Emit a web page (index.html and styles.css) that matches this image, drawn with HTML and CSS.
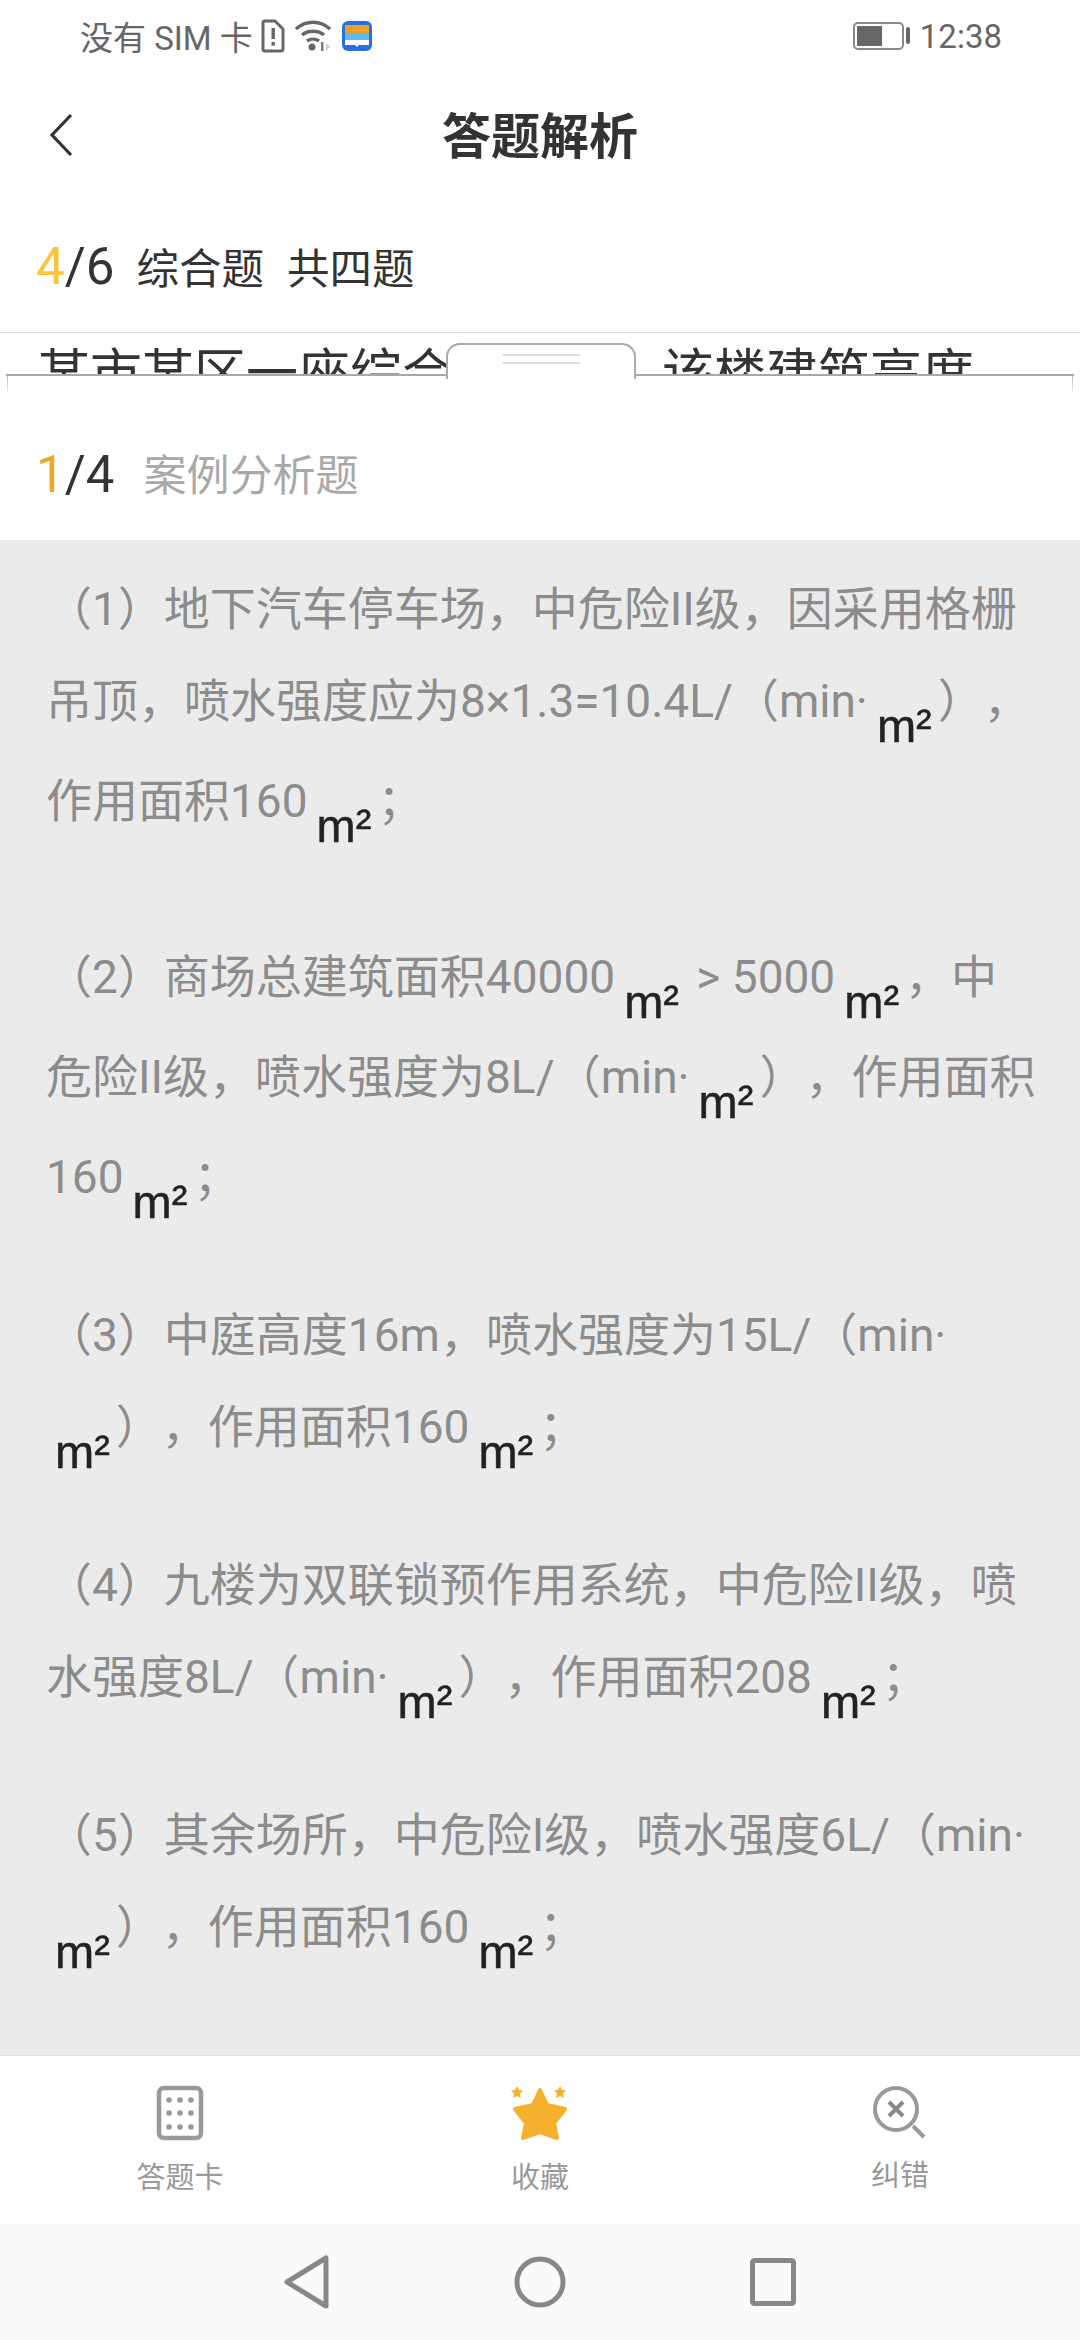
FILE: index.html
```html
<!DOCTYPE html>
<html lang="zh-CN">
<head>
<meta charset="UTF-8">
<meta name="viewport" content="width=device-width, initial-scale=1.0">
<title>答题解析</title>
<link rel="stylesheet" href="styles.css">
</head>
<body>
<div class="app">
  <div class="status-bar">
    <div class="status-left">
      <span>没有 SIM 卡</span>
      <svg class="ico-sim" width="24" height="34" viewBox="0 0 24 34"><path d="M4 2h10l8 8v20a2 2 0 0 1-2 2H4a2 2 0 0 1-2-2V4a2 2 0 0 1 2-2z" fill="none" stroke="#666" stroke-width="3"/><rect x="10.5" y="9" width="3.4" height="11" fill="#666"/><rect x="10.5" y="23" width="3.4" height="3.6" fill="#666"/></svg>
      <svg class="ico-wifi" width="36" height="32" viewBox="0 0 36 32"><path d="M1 9C11 0 25 0 35 9" fill="none" stroke="#666" stroke-width="3.4"/><path d="M7 15c6-5 16-5 22 0" fill="none" stroke="#666" stroke-width="3.4"/><path d="M12 21c3.500-2.500 8.500-2.500 12 0" fill="none" stroke="#666" stroke-width="3.4"/><circle cx="17" cy="27" r="3.500" fill="#666"/><rect x="26" y="22" width="2.500" height="9" fill="#777"/><path d="M31 23l4 4-4 4z" fill="#ccc"/></svg>
      <svg class="ico-app" width="30" height="30" viewBox="0 0 30 30"><rect width="30" height="30" rx="6" fill="#2a6fe0"/><rect x="3" y="4" width="24" height="8" fill="#ee9f2c"/><rect x="3" y="12" width="24" height="7" fill="#5cbcf5"/><path d="M3 19h24v5H17l-2 2-2-2H3z" fill="#fff"/></svg>
    </div>
    <div class="status-right">
      <svg class="ico-batt" width="58" height="28" viewBox="0 0 58 28"><rect x="1" y="1" width="49" height="26" rx="4" fill="none" stroke="#888" stroke-width="2"/><rect x="4" y="4" width="25" height="20" fill="#666"/><rect x="53" y="5" width="4" height="17" rx="2" fill="#666"/></svg>
      <span>12:38</span>
    </div>
  </div>

  <div class="nav-bar">
    <svg class="back" width="24" height="44" viewBox="0 0 24 44"><path d="M22 2L3 22l19 20" fill="none" stroke="#333" stroke-width="3.200"/></svg>
    <div class="nav-title">答题解析</div>
  </div>

  <div class="count-row main-count">
    <span class="count"><em class="gold">4</em>/6</span>
    <span class="type">综合题</span>
    <span class="type">共四题</span>
  </div>

  <div class="question-peek">某市某区一座综合商业楼，该楼建筑高度</div>

  <div class="sheet">
    <div class="handle"><i></i><i></i></div>
    <div class="count-row sub-count">
      <span class="count"><em class="amber">1</em>/4</span>
      <span class="sub-type">案例分析题</span>
    </div>
  </div>

  <div class="analysis">
    <p class="first">（1）地下汽车停车场，中危险II级，因采用格栅<br>吊顶，喷水强度应为8×1.3=10.4L/（min·<span class="unit">m²</span>），<br>作用面积160<span class="unit">m²</span>；</p>
    <p>（2）商场总建筑面积40000<span class="unit">m²</span> &gt; 5000<span class="unit">m²</span>，中<br>危险II级，喷水强度为8L/（min·<span class="unit">m²</span>），作用面积<br>160<span class="unit">m²</span>；</p>
    <p>（3）中庭高度16m，喷水强度为15L/（min·<br><span class="unit">m²</span>），作用面积160<span class="unit">m²</span>；</p>
    <p>（4）九楼为双联锁预作用系统，中危险II级，喷<br>水强度8L/（min·<span class="unit">m²</span>），作用面积208<span class="unit">m²</span>；</p>
    <p>（5）其余场所，中危险I级，喷水强度6L/（min·<br><span class="unit">m²</span>），作用面积160<span class="unit">m²</span>；</p>
  </div>

  <div class="tab-bar">
    <div class="tab">
      <svg width="48" height="56" viewBox="0 0 48 56"><rect x="3" y="3" width="42" height="50" rx="5" fill="none" stroke="#999" stroke-width="4.500"/><g fill="#999"><circle cx="13" cy="15" r="2.800"/><circle cx="24" cy="15" r="2.800"/><circle cx="35" cy="15" r="2.800"/><circle cx="13" cy="28" r="2.800"/><circle cx="24" cy="28" r="2.800"/><circle cx="35" cy="28" r="2.800"/><circle cx="13" cy="42" r="2.800"/><circle cx="24" cy="42" r="2.800"/><circle cx="35" cy="42" r="2.800"/></g></svg>
      <span>答题卡</span>
    </div>
    <div class="tab">
      <svg width="60" height="56" viewBox="0 0 60 56"><path d="M30 5l7 15 18 4-11 14 3 15-17-6-17 6 3-15L5 24l18-4z" fill="#f5b02e" stroke="#f5b02e" stroke-width="4" stroke-linejoin="round"/><path d="M7 1l2 4 4 .6-3 3 .8 4.400L7 11l-3.800 2 .8-4.400-3-3L5 5z" fill="#f5b02e"/><path d="M50 1l2 4 4 .6-3 3 .8 4.400L50 11l-3.800 2 .8-4.400-3-3L48 5z" fill="#f5b02e"/></svg>
      <span>收藏</span>
    </div>
    <div class="tab">
      <svg width="56" height="54" viewBox="0 0 56 54"><circle cx="24" cy="24" r="21" fill="none" stroke="#999" stroke-width="4"/><path d="M17 17l14 14M31 17L17 31" fill="none" stroke="#888" stroke-width="4"/><path d="M41 41l11 11" fill="none" stroke="#999" stroke-width="4"/></svg>
      <span>纠错</span>
    </div>
  </div>

  <div class="sys-nav">
    <svg width="46" height="54" viewBox="0 0 46 54"><path d="M42 3v48L3 27z" fill="none" stroke="#888" stroke-width="5" stroke-linejoin="round"/></svg>
    <svg width="52" height="52" viewBox="0 0 52 52"><circle cx="26" cy="26" r="23" fill="none" stroke="#888" stroke-width="5"/></svg>
    <svg width="46" height="48" viewBox="0 0 46 48"><rect x="2.500" y="2.500" width="41" height="43" rx="2" fill="none" stroke="#888" stroke-width="5"/></svg>
  </div>
</div>
</body>
</html>
```

FILE: styles.css
```css
body {
  margin: 0;
  background-color: #fff;
  font-family: Roboto, "Noto Sans CJK SC", sans-serif;
  text-spacing-trim: space-all;
}
.app {
  width: 1080px;
  height: 2340px;
  display: flex;
  flex-direction: column;
  overflow: hidden;
}

/* status bar */
.status-bar {
  height: 72px;
  flex-shrink: 0;
  display: flex;
  justify-content: space-between;
  align-items: center;
  padding: 0 78px 0 80px;
  color: #666;
  font-size: 33px;
}
.status-left,
.status-right {
  display: flex;
  align-items: center;
}
.ico-sim { margin-left: 8px; }
.ico-wifi { margin-left: 10px; }
.ico-app { margin-left: 11px; }
.status-right span { margin-left: 9px; font-size: 33px; }

/* top bar */
.nav-bar {
  height: 126px;
  flex-shrink: 0;
  position: relative;
  display: flex;
  align-items: center;
  justify-content: center;
  padding-bottom: 6px;
  box-sizing: border-box;
}
.back {
  position: absolute;
  left: 49px;
  top: 41px;
}
.nav-title {
  font-size: 49px;
  font-weight: 700;
  color: #333;
}

/* 4/6 and 1/4 rows */
.count-row {
  display: flex;
  align-items: center;
}
.count em { font-style: normal; }
.gold { color: #f8c63d; }
.amber { color: #eba823; }
.count {
  font-size: 51px;
  color: #333;
  padding-top: 3px;
}
.main-count {
  height: 135px;
  flex-shrink: 0;
  box-sizing: border-box;
  padding-left: 36px;
  border-bottom: 1px solid #e2e2e2;
}
.type {
  font-size: 42.5px;
  color: #333;
  margin-left: 23px;
}
.count + .type { margin-left: 22px; }

.question-peek {
  height: 41px;
  flex-shrink: 0;
  overflow: hidden;
  padding-left: 38px;
  box-sizing: border-box;
  font-size: 52px;
  line-height: 84px;
  color: #333;
  white-space: nowrap;
}

/* pull-up panel */
.sheet {
  position: relative;
  height: 166px;
  flex-shrink: 0;
  background-color: #fff;
  border-top: 2px solid #a8a8a8;
  box-sizing: border-box;
  margin: 0 6px;
}
.sheet::before,
.sheet::after {
  content: "";
  position: absolute;
  top: 0;
  width: 1px;
  height: 20px;
  background: linear-gradient(#bbb, #fff);
}
.sheet::before { left: 1px; }
.sheet::after { right: 1px; }
.handle {
  position: absolute;
  left: 440px;
  top: -33px;
  width: 190px;
  height: 36px;
  background-color: #fff;
  border: 2px solid #aaa;
  border-bottom: 0;
  border-radius: 14px 14px 0 0;
  display: flex;
  flex-direction: column;
  align-items: center;
  gap: 6px;
  padding-top: 9px;
  box-sizing: border-box;
}
.handle i {
  display: block;
  width: 77px;
  height: 2px;
  background-color: #ddd;
}
.sub-count {
  padding: 66px 0 0 30px;
}
.sub-type {
  font-size: 43px;
  color: #a9a9a9;
  margin-left: 29px;
  margin-top: -3px;
}

/* analysis text */
.analysis {
  height: 1516px;
  flex-shrink: 0;
  box-sizing: border-box;
  background-color: #ebebeb;
  border-bottom: 1px solid #e0e0e0;
  padding: 23px 0 0 46px;
  font-size: 46px;
  line-height: 92px;
  color: #8c8c8c;
  white-space: nowrap;
  overflow: hidden;
}
.analysis p {
  margin: 0 0 58px;
}
.analysis p.first {
  margin-bottom: 76px;
}
.unit {
  display: inline-block;
  margin: 0 6px 0 9px;
  padding-bottom: 7px;
  line-height: 44px;
  vertical-align: -25px;
  font-family: "Liberation Sans", sans-serif;
  font-size: 47px;
  color: #222;
  -webkit-text-stroke: 0.5px #222;
  filter: blur(0.4px);
}

/* bottom tabs */
.tab-bar {
  height: 168px;
  flex-shrink: 0;
  display: grid;
  grid-template-columns: 360px 360px 360px;
  background-color: #fff;
}
.tab {
  display: flex;
  flex-direction: column;
  align-items: center;
  padding-top: 29px;
  color: #999;
  font-size: 29px;
  line-height: 40px;
}
.tab svg { margin-bottom: 17px; }

.sys-nav {
  height: 116px;
  flex-shrink: 0;
  background-color: #fafafa;
  display: flex;
  justify-content: center;
  align-items: center;
  gap: 184px;
}
```
